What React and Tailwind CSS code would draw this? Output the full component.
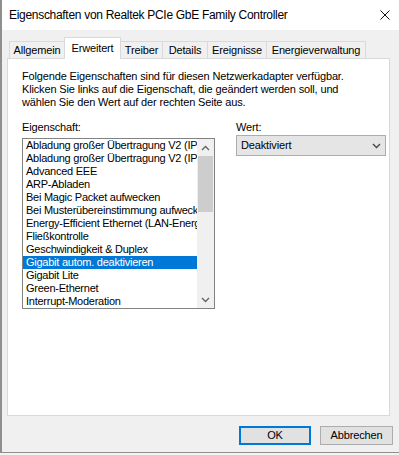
import React from 'react';

const TABS = [
  { label: 'Allgemein', w: 'w-[55px]', cls: 'border-l border-t' },
  { label: 'Erweitert', w: 'w-[57px]', selected: true },
  { label: 'Treiber', w: 'w-[42px]', cls: 'border-t border-r' },
  { label: 'Details', w: 'w-[45px]', cls: 'border-t border-r' },
  { label: 'Ereignisse', w: 'w-[59px]', cls: 'border-t border-r' },
  { label: 'Energieverwaltung', w: 'w-[99px]', cls: 'border-t border-r' },
];

const ITEMS = [
  'Abladung großer Übertragung V2 (IPv4)',
  'Abladung großer Übertragung V2 (IPv6)',
  'Advanced EEE',
  'ARP-Abladen',
  'Bei Magic Packet aufwecken',
  'Bei Musterübereinstimmung aufwecken',
  'Energy-Efficient Ethernet (LAN-Energiesparmodus)',
  'Fließkontrolle',
  'Geschwindigkeit & Duplex',
  'Gigabit autom. deaktivieren',
  'Gigabit Lite',
  'Green-Ethernet',
  'Interrupt-Moderation',
];

const SELECTED = 9;

function Chevron({ up = false, className = '' }) {
  return (
    <svg width="9" height="6" viewBox="0 0 9 6" className={className}>
      <path
        d={up ? 'M1 5 L4.5 1.5 L8 5' : 'M1 1 L4.5 4.5 L8 1'}
        fill="none"
        stroke="currentColor"
        strokeWidth="1.3"
      />
    </svg>
  );
}

export default function App() {
  return (
    <div className="w-[399px] h-[455px] bg-[#f3f3f3] overflow-hidden">
      <div className="h-[453px] flex flex-col bg-[#f0f0f0] border-l-2 border-b border-[#8f8f8f] text-black font-['Liberation_Sans',Arial,sans-serif] text-[11px] tracking-[-0.15px]">
        {/* Title bar */}
        <div className="h-[30px] shrink-0 bg-white flex items-center pl-[7px] pr-[9px]">
          <span className="flex-1 text-[12px] leading-none tracking-[-0.3px]">
            Eigenschaften von Realtek PCIe GbE Family Controller
          </span>
          <svg width="10" height="10" viewBox="0 0 10 10">
            <path d="M0.5 0.5 L9.5 9.5 M9.5 0.5 L0.5 9.5" stroke="#111" strokeWidth="1" fill="none" />
          </svg>
        </div>

        {/* Tabs + page */}
        <div className="pl-[5px] pt-[7px]">
          <div className="flex items-end h-[21px] pl-[2px]">
            {TABS.map((t) =>
              t.selected ? (
                <div
                  key={t.label}
                  className={`${t.w} h-[22px] -mb-px relative z-10 bg-white border border-b-0 border-[#d9d9d9] flex items-start justify-center pt-[4px] leading-[13px]`}
                >
                  {t.label}
                </div>
              ) : (
                <div
                  key={t.label}
                  className={`${t.w} h-[17px] bg-[#f0f0f0] border-[#d9d9d9] ${t.cls} flex items-center justify-center leading-[13px]`}
                >
                  {t.label}
                </div>
              )
            )}
          </div>

          <div className="w-[383px] h-[358px] bg-white border border-[#d9d9d9] pl-[14px] pt-[11px]">
            <p className="leading-[13px]">
              Folgende Eigenschaften sind für diesen Netzwerkadapter verfügbar.
              <br />
              Klicken Sie links auf die Eigenschaft, die geändert werden soll, und
              <br />
              wählen Sie den Wert auf der rechten Seite aus.
            </p>

            <div className="flex gap-[21px] mt-[12px]">
              {/* Property list */}
              <div className="w-[193px]">
                <div className="h-[13px] leading-[13px]">Eigenschaft:</div>
                <div className="mt-[4px] h-[171px] border border-[#828282] flex">
                  <div className="w-[174px] overflow-hidden">
                    {ITEMS.map((item, i) => (
                      <div
                        key={i}
                        className={`h-[13px] leading-[13px] pl-[3px] whitespace-nowrap overflow-hidden tracking-[-0.25px] ${
                          i === SELECTED ? 'bg-[#0078d7] text-white' : ''
                        }`}
                      >
                        {item}
                      </div>
                    ))}
                  </div>
                  <div className="w-[17px] bg-[#f0f0f0] flex flex-col">
                    <div className="h-[17px] flex items-center justify-center text-[#606060]">
                      <Chevron up />
                    </div>
                    <div className="flex-1">
                      <div className="mx-[1px] h-[56px] bg-[#cdcdcd]" />
                    </div>
                    <div className="h-[17px] flex items-center justify-center text-[#606060]">
                      <Chevron />
                    </div>
                  </div>
                </div>
              </div>

              {/* Value */}
              <div className="w-[150px]">
                <div className="h-[13px] leading-[13px]">Wert:</div>
                <div className="mt-[1px] h-[21px] bg-[#e5e5e5] border border-[#adadad] flex items-center pl-[4px] pr-[4px]">
                  <span className="flex-1">Deaktiviert</span>
                  <Chevron className="text-[#444]" />
                </div>
              </div>
            </div>
          </div>
        </div>

        {/* Buttons */}
        <div className="flex justify-end gap-[9px] pr-[6px] mt-[10px]">
          <button className="w-[72px] h-[19px] bg-[#e1e1e1] border border-[#0078d7] shadow-[inset_0_0_0_1px_#0078d7] leading-none">
            OK
          </button>
          <button className="w-[73px] h-[19px] bg-[#e1e1e1] border border-[#adadad] leading-none">
            Abbrechen
          </button>
        </div>
      </div>
    </div>
  );
}
